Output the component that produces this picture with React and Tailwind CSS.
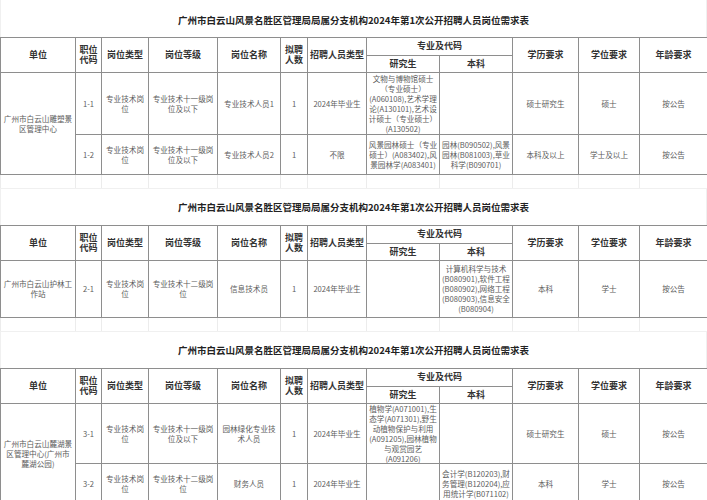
const cols = [75, 26, 47, 69, 63, 27, 59, 73, 73, 66, 61, 68];

const font = { fontFamily: '"Noto Sans CJK SC", "Noto Sans", sans-serif' };

const blocks = [
  {
    rows: [
      {
        h: 62,
        unit: "广州市白云山雕塑景\n区管理中心",
        span: 2,
        cells: [
          "1-1",
          "专业技术岗\n位",
          "专业技术十一级岗\n位及以下",
          "专业技术人员1",
          "1",
          "2024年毕业生",
          "文物与博物馆硕士\n（专业硕士）\n(A060108),艺术学理\n论(A130101),艺术设\n计硕士（专业硕士）\n(A130502)",
          "",
          "硕士研究生",
          "硕士",
          "按公告",
        ],
      },
      {
        h: 40,
        cells: [
          "1-2",
          "专业技术岗\n位",
          "专业技术十一级岗\n位及以下",
          "专业技术人员2",
          "1",
          "不限",
          "风景园林硕士（专业\n硕士）(A083402),风\n景园林学(A083401)",
          "园林(B090502),风景\n园林(B081003),草业\n科学(B090701)",
          "本科及以上",
          "学士及以上",
          "按公告",
        ],
      },
    ],
  },
  {
    rows: [
      {
        h: 57,
        unit: "广州市白云山护林工\n作站",
        span: 1,
        cells: [
          "2-1",
          "专业技术岗\n位",
          "专业技术十二级岗\n位",
          "信息技术员",
          "1",
          "2024年毕业生",
          "",
          "计算机科学与技术\n(B080901),软件工程\n(B080902),网络工程\n(B080903),信息安全\n(B080904)",
          "本科",
          "学士",
          "按公告",
        ],
      },
    ],
  },
  {
    rows: [
      {
        h: 60,
        unit: "广州市白云山麓湖景\n区管理中心(广州市\n麓湖公园)",
        span: 2,
        cells: [
          "3-1",
          "专业技术岗\n位",
          "专业技术十一级岗\n位及以下",
          "园林绿化专业技\n术人员",
          "1",
          "2024年毕业生",
          "植物学(A071001),生\n态学(A071301),野生\n动植物保护与利用\n(A091205),园林植物\n与观赏园艺\n(A091206)",
          "",
          "硕士研究生",
          "硕士",
          "按公告",
        ],
      },
      {
        h: 40,
        cells: [
          "3-2",
          "专业技术岗\n位",
          "专业技术十二级岗\n位",
          "财务人员",
          "1",
          "2024年毕业生",
          "",
          "会计学(B120203),财\n务管理(B120204),应\n用统计学(B071102)",
          "本科",
          "学士",
          "按公告",
        ],
      },
    ],
  },
];

function Lines({ text }) {
  return text.split("\n").map((line, i) => (
    <div key={i} className="whitespace-nowrap">
      {line}
    </div>
  ));
}

function Th({ children, ...props }) {
  return (
    <th
      {...props}
      className="border border-[#8e8e8e] p-0 text-center align-middle text-[9px] font-bold leading-[10.5px] text-[#333]"
    >
      <Lines text={children} />
    </th>
  );
}

function Td({ text, h, ...props }) {
  return (
    <td
      {...props}
      className="border border-[#8e8e8e] p-0 text-center align-middle text-[7.6px] leading-[10px] text-[#5c5c5c]"
    >
      <div
        className="flex flex-col items-center justify-center overflow-hidden"
        style={{ height: h - 1 }}
      >
        <Lines text={text} />
      </div>
    </td>
  );
}

function Spacer() {
  return (
    <div className="flex h-[13px]">
      {cols.map((w, i) => (
        <div
          key={i}
          className="h-full border-l border-[#ececec]"
          style={{ width: w }}
        />
      ))}
    </div>
  );
}

function Block({ block, first }) {
  const total = block.rows.reduce((s, r) => s + r.h, 0);
  return (
    <section>
      {!first && <Spacer />}
      <div
        className={
          "flex h-[37px] items-center justify-center border-x border-[#f0f0f0] " +
          (first ? "pt-[4px]" : "border-t pt-[1px]")
        }
      >
        <h1 className="whitespace-nowrap text-[9.5px] font-bold text-[#222]">
          广州市白云山风景名胜区管理局局属分支机构2024年第1次公开招聘人员岗位需求表
        </h1>
      </div>
      <table className="w-[707px] table-fixed border-collapse">
        <colgroup>
          {cols.map((w, i) => (
            <col key={i} style={{ width: w }} />
          ))}
        </colgroup>
        <thead>
          <tr className="h-[18px]">
            <Th rowSpan={2}>单位</Th>
            <Th rowSpan={2}>{"职位\n代码"}</Th>
            <Th rowSpan={2}>岗位类型</Th>
            <Th rowSpan={2}>岗位等级</Th>
            <Th rowSpan={2}>岗位名称</Th>
            <Th rowSpan={2}>{"拟聘\n人数"}</Th>
            <Th rowSpan={2}>招聘人员类型</Th>
            <Th colSpan={2}>专业及代码</Th>
            <Th rowSpan={2}>学历要求</Th>
            <Th rowSpan={2}>学位要求</Th>
            <Th rowSpan={2}>年龄要求</Th>
          </tr>
          <tr className="h-[17px]">
            <Th>研究生</Th>
            <Th>本科</Th>
          </tr>
        </thead>
        <tbody>
          {block.rows.map((row, i) => (
            <tr key={i}>
              {row.unit && (
                <Td
                  text={row.unit}
                  rowSpan={row.span}
                  h={row.span > 1 ? total : row.h}
                />
              )}
              {row.cells.map((c, j) => (
                <Td key={j} text={c} h={row.h} />
              ))}
            </tr>
          ))}
        </tbody>
      </table>
    </section>
  );
}

export default function App() {
  return (
    <main className="h-[500px] w-[707px] overflow-hidden bg-white" style={font}>
      {blocks.map((b, i) => (
        <Block key={i} block={b} first={i === 0} />
      ))}
    </main>
  );
}
